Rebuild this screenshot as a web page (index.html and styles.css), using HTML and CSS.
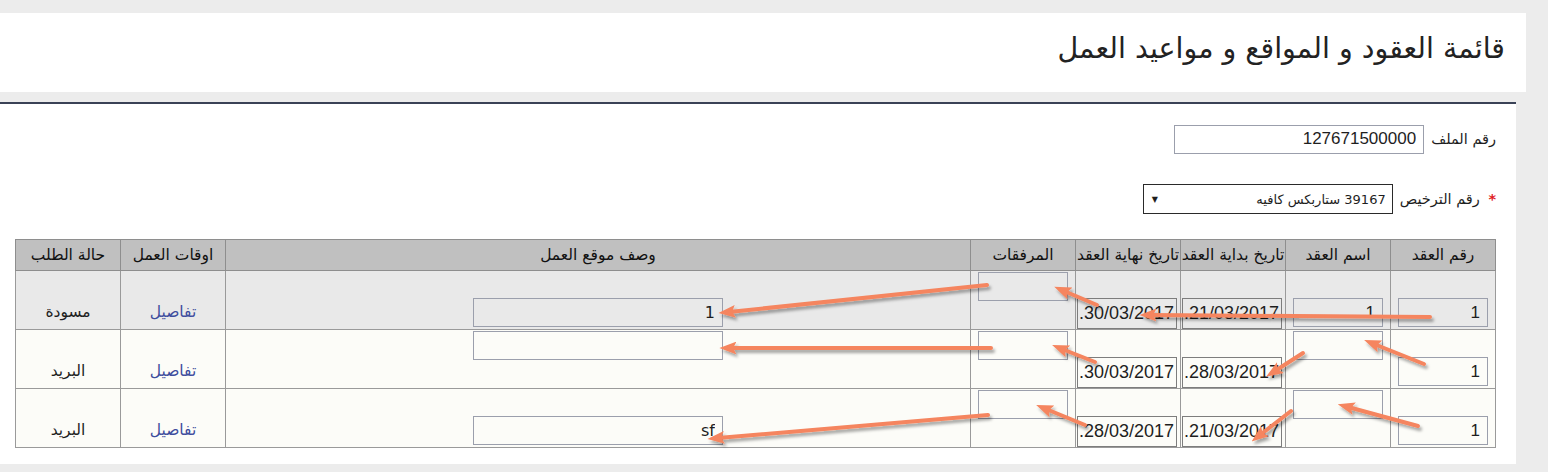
FILE: index.html
```html
<!DOCTYPE html>
<html lang="ar" dir="rtl">
<head>
  <meta charset="UTF-8" />
  <meta name="viewport" content="width=device-width, initial-scale=1.0"/>
  <title>قائمة العقود و المواقع و مواعيد العمل</title>
  <link rel="stylesheet" href="styles.css">
</head>
<body>
  <div class="page-head">
    <h1>قائمة العقود و المواقع و مواعيد العمل</h1>
  </div>

  <div class="panel">
    <div class="field">
      <label>رقم الملف</label>
      <input class="wide" type="text" value="127671500000" readonly />
    </div>
    <div class="field">
      <label><span class="req">*</span> رقم الترخيص</label>
      <div class="select">
        <span>39167 ستاربكس كافيه</span>
        <span class="caret">▼</span>
      </div>
    </div>

    <table class="grid">
      <colgroup>
        <col style="width:105px"><col style="width:105px"><col style="width:105px"><col style="width:105px">
        <col style="width:105px"><col><col style="width:105px"><col style="width:105px">
      </colgroup>
      <thead>
        <tr>
          <th>رقم العقد</th>
          <th>اسم العقد</th>
          <th>تاريخ بداية العقد</th>
          <th>تاريخ نهاية العقد</th>
          <th>المرفقات</th>
          <th>وصف موقع العمل</th>
          <th>اوقات العمل</th>
          <th>حالة الطلب</th>
        </tr>
      </thead>
      <tbody>
        <tr class="odd">
          <td><input class="box small" type="text" value="1" readonly /></td>
          <td><input class="box small" type="text" value="1" readonly /></td>
          <td class="dcell"><input class="box date" type="text" value=".21/03/2017" readonly /></td>
          <td class="dcell"><input class="box date" type="text" value=".30/03/2017" readonly /></td>
          <td class="top"><input class="box small" type="text" value="" readonly /></td>
          <td><input class="box desc" type="text" value="1" readonly /></td>
          <td class="txt"><a href="#">تفاصيل</a></td>
          <td class="txt">مسودة</td>
        </tr>
        <tr>
          <td><input class="box small" type="text" value="1" readonly /></td>
          <td class="top"><input class="box small" type="text" value="" readonly /></td>
          <td class="dcell"><input class="box date" type="text" value=".28/03/2017" readonly /></td>
          <td class="dcell"><input class="box date" type="text" value=".30/03/2017" readonly /></td>
          <td class="top"><input class="box small" type="text" value="" readonly /></td>
          <td class="top"><input class="box desc" type="text" value="" readonly /></td>
          <td class="txt"><a href="#">تفاصيل</a></td>
          <td class="txt">البريد</td>
        </tr>
        <tr>
          <td><input class="box small" type="text" value="1" readonly /></td>
          <td class="top"><input class="box small" type="text" value="" readonly /></td>
          <td class="dcell"><input class="box date" type="text" value=".21/03/2017" readonly /></td>
          <td class="dcell"><input class="box date" type="text" value=".28/03/2017" readonly /></td>
          <td class="top"><input class="box small" type="text" value="" readonly /></td>
          <td><input class="box desc" type="text" value="sf" readonly /></td>
          <td class="txt"><a href="#">تفاصيل</a></td>
          <td class="txt">البريد</td>
        </tr>
      </tbody>
    </table>
  </div>

  <!-- annotation arrows drawn over the table -->
  <svg class="notes" width="1548" height="472" viewBox="0 0 1548 472">
    <defs>
      <marker id="head" viewBox="0 0 16 12" refX="6" refY="6" markerWidth="17" markerHeight="13"
              markerUnits="userSpaceOnUse" orient="auto">
        <path d="M0,0 L16,6 L0,12 L3,6 Z" fill="#f5855f"/>
      </marker>
      <filter id="shade" x="-10%" y="-50%" width="120%" height="200%">
        <feDropShadow dx="2" dy="3" stdDeviation="1.5" flood-color="#000" flood-opacity="0.35"/>
      </filter>
    </defs>
    <g stroke="#f5855f" stroke-width="4" stroke-linecap="round" fill="none" marker-end="url(#head)" filter="url(#shade)">
      <line x1="1430" y1="317" x2="1150" y2="315"/>
      <line x1="1097" y1="305" x2="1064" y2="291"/>
      <line x1="987" y1="285" x2="729" y2="312"/>
      <line x1="1424" y1="364" x2="1374" y2="344"/>
      <line x1="1303" y1="353" x2="1275" y2="371"/>
      <line x1="1095" y1="362" x2="1062" y2="349"/>
      <line x1="991" y1="348" x2="730" y2="348"/>
      <line x1="1418" y1="426" x2="1348" y2="407"/>
      <line x1="1291" y1="411" x2="1260" y2="435"/>
      <line x1="1085" y1="425" x2="1046" y2="409"/>
      <line x1="988" y1="415" x2="718" y2="438"/>
    </g>
  </svg>
</body>
</html>
```

FILE: styles.css
```css
body {
  margin: 0;
  position: relative;
  height: 472px;
  background: #ececec;
  font-family: "Liberation Sans", "DejaVu Sans", sans-serif;
  color: #1e1e1e;
  overflow: hidden;
}
.page-head {
  width: 1526px;
  height: 79px;
  margin: 13px auto 0 0;
  background: #fff;
  display: flex;
  align-items: center;
}
.page-head h1 {
  margin: 0;
  padding: 0 21px 8px 0;
  font-family: "DejaVu Sans", sans-serif;
  font-size: 28.5px;
  font-weight: normal;
  color: #222;
}
.panel {
  width: 1516px;
  height: 362px;
  margin: 10px auto 0 0;
  box-sizing: border-box;
  border-top: 2px solid #3a4256;
  background: #fff;
  padding: 20px 20px 0 0;
}
.field {
  display: flex;
  align-items: center;
  gap: 7px;
  height: 30px;
  margin-bottom: 30px;
}
.field label {
  font-family: "DejaVu Sans", sans-serif;
  font-size: 14.5px;
}
.req {
  color: #e0201e;
  font-weight: bold;
  margin-left: 4px;
}
.wide {
  box-sizing: border-box;
  width: 250px;
  height: 29px;
  margin: 0;
  border: 1px solid #9b9fac;
  background: #fff;
  font-family: "Liberation Sans", sans-serif;
  font-size: 17px;
  color: #1e1e1e;
  padding: 0 7px;
  text-align: right;
  outline: none;
}
.select {
  box-sizing: border-box;
  width: 250px;
  height: 30px;
  border: 1px solid #2a2a2a;
  display: flex;
  align-items: center;
  justify-content: space-between;
  padding: 0 6px 0 8px;
  font-family: "DejaVu Sans", sans-serif;
  font-size: 13px;
}
.caret {
  font-size: 8px;
}
.grid {
  width: 1481px;
  margin-top: -5px;
  table-layout: fixed;
  border-collapse: collapse;
  border: 1px solid #6c6c6c;
  font-family: "DejaVu Sans", sans-serif;
  font-size: 15.5px;
}
.grid th {
  height: 30px;
  padding: 0;
  background: #c0c0c0;
  border: 1px solid #8e8e8e;
  font-size: 15.5px;
  font-weight: normal;
  color: #111;
}
.grid tbody tr {
  height: 59px;
}
.grid td {
  padding: 1px 1px 2px;
  border: 1px solid #9a9a9a;
  background: #fcfcf8;
  text-align: center;
  vertical-align: bottom;
}
.grid tr.odd td {
  background: #e9e9e9;
}
.grid td.top {
  vertical-align: top;
}
.grid td.dcell {
  padding: 0 3px 0 1px;
}
.grid td.txt {
  padding-bottom: 8px;
}
.grid a {
  color: #3d4d9d;
  text-decoration: none;
}
.box {
  box-sizing: border-box;
  display: block;
  margin: 0 auto;
  height: 29px;
  border: 1px solid #9b9fac;
  background: transparent;
  font-family: "Liberation Sans", sans-serif;
  font-size: 17px;
  color: #1e1e1e;
  padding: 0 7px;
  text-align: right;
  outline: none;
}
.box.small {
  width: 90px;
}
.box.desc {
  width: 250px;
  font-family: "DejaVu Sans", sans-serif;
  font-size: 16px;
}
.box.date {
  width: 100px;
  height: 31px;
  border-color: #7d7d7d;
  direction: ltr;
  text-align: left;
  padding: 0 1px;
  margin: 0;
  font-size: 18px;
}
.notes {
  position: absolute;
  top: 0;
  left: 0;
  pointer-events: none;
}
```
